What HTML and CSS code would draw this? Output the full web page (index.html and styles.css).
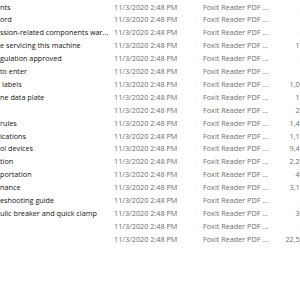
FILE: index.html
```html
<!DOCTYPE html>
<html lang="en">
<head>
<meta charset="utf-8">
<title>Files</title>
<link rel="stylesheet" href="styles.css">
</head>
<body>
<div class="list">
  <div class="row"><span class="name">nts</span><span class="date">11/3/2020 2:48 PM</span><span class="type">Foxit Reader PDF ...</span><span class="size">52 KB</span></div>
  <div class="row"><span class="name">ord</span><span class="date">11/3/2020 2:48 PM</span><span class="type">Foxit Reader PDF ...</span><span class="size">38 KB</span></div>
  <div class="row"><span class="name">ssion-related components war...</span><span class="date">11/3/2020 2:48 PM</span><span class="type">Foxit Reader PDF ...</span><span class="size">47 KB</span></div>
  <div class="row"><span class="name">e servicing this machine</span><span class="date">11/3/2020 2:48 PM</span><span class="type">Foxit Reader PDF ...</span><span class="size">132 KB</span></div>
  <div class="row"><span class="name">gulation approved</span><span class="date">11/3/2020 2:48 PM</span><span class="type">Foxit Reader PDF ...</span><span class="size">64 KB</span></div>
  <div class="row"><span class="name">to enter</span><span class="date">11/3/2020 2:48 PM</span><span class="type">Foxit Reader PDF ...</span><span class="size">71 KB</span></div>
  <div class="row"><span class="name ind">labels</span><span class="date">11/3/2020 2:48 PM</span><span class="type">Foxit Reader PDF ...</span><span class="size">1,046 KB</span></div>
  <div class="row"><span class="name">ne data plate</span><span class="date">11/3/2020 2:48 PM</span><span class="type">Foxit Reader PDF ...</span><span class="size">158 KB</span></div>
  <div class="row"><span class="name"></span><span class="date">11/3/2020 2:48 PM</span><span class="type">Foxit Reader PDF ...</span><span class="size">263 KB</span></div>
  <div class="row"><span class="name ind2">rules</span><span class="date">11/3/2020 2:48 PM</span><span class="type">Foxit Reader PDF ...</span><span class="size">1,452 KB</span></div>
  <div class="row"><span class="name">ications</span><span class="date">11/3/2020 2:48 PM</span><span class="type">Foxit Reader PDF ...</span><span class="size">1,139 KB</span></div>
  <div class="row"><span class="name">ol devices</span><span class="date">11/3/2020 2:48 PM</span><span class="type">Foxit Reader PDF ...</span><span class="size">9,427 KB</span></div>
  <div class="row"><span class="name">tion</span><span class="date">11/3/2020 2:48 PM</span><span class="type">Foxit Reader PDF ...</span><span class="size">2,268 KB</span></div>
  <div class="row"><span class="name">portation</span><span class="date">11/3/2020 2:48 PM</span><span class="type">Foxit Reader PDF ...</span><span class="size">415 KB</span></div>
  <div class="row"><span class="name">nance</span><span class="date">11/3/2020 2:48 PM</span><span class="type">Foxit Reader PDF ...</span><span class="size">3,174 KB</span></div>
  <div class="row"><span class="name">eshooting guide</span><span class="date">11/3/2020 2:48 PM</span><span class="type">Foxit Reader PDF ...</span><span class="size">86 KB</span></div>
  <div class="row"><span class="name">ulic breaker and quick clamp</span><span class="date">11/3/2020 2:48 PM</span><span class="type">Foxit Reader PDF ...</span><span class="size">356 KB</span></div>
  <div class="row"><span class="name"></span><span class="date">11/3/2020 2:48 PM</span><span class="type">Foxit Reader PDF ...</span><span class="size">29 KB</span></div>
  <div class="row"><span class="name"></span><span class="date">11/3/2020 2:48 PM</span><span class="type">Foxit Reader PDF ...</span><span class="size">22,541 KB</span></div>
</div>
</body>
</html>
```
FILE: styles.css
```css
html, body {
  margin: 0;
  padding: 0;
  background: #ffffff;
  overflow: hidden;
}
body {
  width: 300px;
  height: 300px;
  font-family: "Open Sans", "Noto Sans", sans-serif;
  font-size: 7.25px;
}
.list {
  display: flex;
  flex-direction: column;
  width: 330px;
  padding-top: 0.5px;
}
.row {
  display: grid;
  grid-template-columns: 114px 89px 80px 36px;
  height: 12.92px;
  line-height: 12.92px;
  white-space: nowrap;
}
.name {
  color: #111111;
  overflow: hidden;
}
.ind { padding-left: 2px; }
.ind2 { padding-left: 0; }
.date, .type, .size {
  color: #6d6d6d;
}
.size {
  text-align: right;
}
```
